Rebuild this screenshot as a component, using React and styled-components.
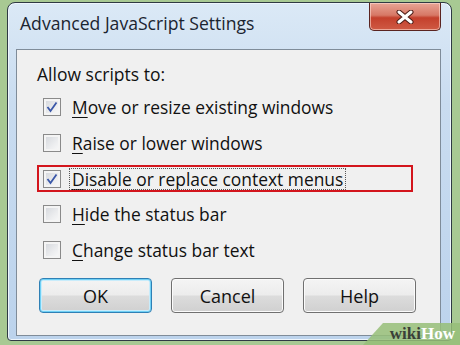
import React from "react";
import styled, { createGlobalStyle } from "styled-components";

const GlobalStyle = createGlobalStyle`
  html, body {
    margin: 0;
    padding: 0;
    background: #a8c993;
  }
  body {
    width: 460px;
    height: 345px;
    overflow: hidden;
    font-family: "Open Sans", "Noto Sans", "Liberation Sans", sans-serif;
  }
`;

const Stage = styled.div`
  position: relative;
  width: 460px;
  height: 345px;
  padding: 2px 0 0 7px;
  box-sizing: border-box;
`;

const Window = styled.div`
  width: 445px;
  height: 339px;
  box-sizing: border-box;
  border: 1px solid #2f3a44;
  border-radius: 8px 8px 4px 4px;
  background: linear-gradient(180deg, #dbe9f6 0%, #c9dcf0 30%, #bcd3ec 100%);
  box-shadow: inset 0 0 0 1px #eef5fc;
  display: flex;
  flex-direction: column;
  padding: 0 10px 4px 8px;
`;

const TitleBar = styled.div`
  height: 46px;
  display: flex;
  justify-content: space-between;
  align-items: flex-start;
`;

const Title = styled.div`
  padding: 8px 0 0 4px;
  font-size: 17.6px;
  color: #1b2430;
`;

const CloseButton = styled.div`
  width: 72px;
  height: 28px;
  box-sizing: border-box;
  border: 1px solid #5a2420;
  border-top: none;
  border-radius: 0 0 5px 5px;
  background: linear-gradient(180deg, #e8a596 0%, #d77866 45%, #c4402c 55%, #cf5a44 100%);
  box-shadow: inset 0 0 0 1px rgba(255, 220, 210, 0.6);
  display: flex;
  align-items: center;
  justify-content: center;
`;

const Panel = styled.div`
  flex: 1;
  border: 1px solid #7f8c99;
  background: #f0f0f0;
  padding: 13px 0 0 20px;
  display: flex;
  flex-direction: column;
`;

const Label = styled.div`
  font-size: 17.5px;
  line-height: 22px;
  color: #111;
  margin-bottom: 8.5px;
`;

const Options = styled.div`
  display: flex;
  flex-direction: column;
  gap: 8.75px;
`;

const Row = styled.div`
  width: 376px;
  height: 27px;
  box-sizing: border-box;
  border: 2.5px solid ${(p) => (p.$highlight ? "#d3151c" : "transparent")};
  display: flex;
  align-items: center;
  padding-left: 4px;
  gap: 9px;
`;

const Box = styled.span`
  width: 18px;
  height: 18px;
  box-sizing: border-box;
  border: 1px solid #8a8a8a;
  background: linear-gradient(135deg, #d2d5da 0%, #ecedef 60%, #fafafa 100%);
  box-shadow: inset 0 0 0 2px #f4f4f4;
  display: flex;
  align-items: center;
  justify-content: center;
  flex-shrink: 0;
`;

const OptionText = styled.span`
  font-size: 17.4px;
  color: #111;
  line-height: 20px;
  padding: 0 2px;
  outline: ${(p) => (p.$focus ? "1px dotted #555" : "none")};
  u {
    text-decoration-thickness: 1px;
    text-underline-offset: 3px;
  }
`;

const ButtonRow = styled.div`
  display: flex;
  gap: 19px;
  margin-top: 14.5px;
  padding-left: 2px;
`;

const Button = styled.div`
  width: 113px;
  height: 35px;
  box-sizing: border-box;
  border: 1px solid ${(p) => (p.$default ? "#2f80b5" : "#707070")};
  border-radius: 4px;
  background: linear-gradient(180deg, #f4f4f4 0%, #ececec 48%, #dcdcdc 52%, #d0d0d0 100%);
  box-shadow: ${(p) =>
    p.$default
      ? "inset 0 0 0 1px #6fd0f5, inset 0 0 0 2px #c8ecfb"
      : "inset 0 0 0 1px #fbfbfb"};
  display: flex;
  align-items: center;
  justify-content: center;
  font-size: 18px;
  color: #111;
`;

const Watermark = styled.div`
  position: absolute;
  right: 0;
  bottom: 0;
  width: 97px;
  height: 22px;
  background: rgba(150, 190, 120, 0.85);
  clip-path: polygon(20px 0, 100% 0, 100% 100%, 0 100%);
  display: flex;
  align-items: center;
  justify-content: flex-end;
  padding-right: 5px;
  box-sizing: border-box;
  font-family: "Liberation Serif", "DejaVu Serif", serif;
  font-weight: bold;
  font-size: 17px;
  span:first-child {
    color: #3a3f38;
  }
  span:last-child {
    color: #ffffff;
  }
`;

const Check = () => (
  <svg width="12" height="12" viewBox="0 0 12 12">
    <path d="M1.5 6 L4.5 10 L10.5 1.5" fill="none" stroke="#3a57a8" strokeWidth="1.8" />
  </svg>
);

const options = [
  { key: "M", rest: "ove or resize existing windows", checked: true },
  { key: "R", rest: "aise or lower windows", checked: false },
  { key: "D", rest: "isable or replace context menus", checked: true, highlight: true },
  { key: "H", rest: "ide the status bar", checked: false },
  { key: "C", rest: "hange status bar text", checked: false },
];

export default function App() {
  return (
    <Stage>
      <GlobalStyle />
      <Window>
        <TitleBar>
          <Title>Advanced JavaScript Settings</Title>
          <CloseButton>
            <svg width="18" height="14" viewBox="0 0 18 14">
              <path d="M3 2 L15 12 M15 2 L3 12" stroke="#4a1a14" strokeWidth="5" strokeLinecap="round" />
              <path d="M3 2 L15 12 M15 2 L3 12" stroke="#ffffff" strokeWidth="3" strokeLinecap="round" />
            </svg>
          </CloseButton>
        </TitleBar>
        <Panel>
          <Label>Allow scripts to:</Label>
          <Options>
            {options.map((o) => (
              <Row key={o.key} $highlight={o.highlight}>
                <Box>{o.checked && <Check />}</Box>
                <OptionText $focus={o.highlight}>
                  <u>{o.key}</u>
                  {o.rest}
                </OptionText>
              </Row>
            ))}
          </Options>
          <ButtonRow>
            <Button $default>OK</Button>
            <Button>Cancel</Button>
            <Button>Help</Button>
          </ButtonRow>
        </Panel>
      </Window>
      <Watermark>
        <span>wiki</span>
        <span>How</span>
      </Watermark>
    </Stage>
  );
}
